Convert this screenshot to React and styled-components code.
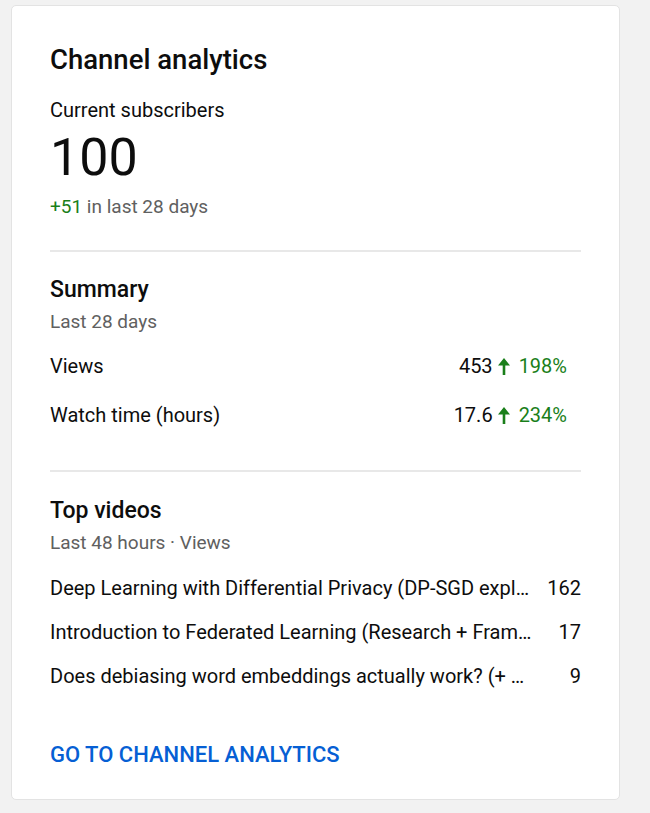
import styled, { createGlobalStyle } from "styled-components";

const GlobalStyle = createGlobalStyle`
  body {
    margin: 0;
    background-color: #f2f2f2;
    font-family: Roboto, "Noto Sans", Arial, sans-serif;
    color: #0d0d0d;
  }
`;

const Page = styled.div`
  padding: 5px 30px 12px 11px;
`;

const Card = styled.div`
  width: 609px;
  box-sizing: border-box;
  background-color: #ffffff;
  border: 1px solid #e3e3e3;
  border-radius: 5px;
  padding: 38px 38px 32px;
`;

const Title = styled.h1`
  margin: 0;
  font-size: 27.5px;
  line-height: 32px;
  font-weight: 500;
`;

const Label = styled.div`
  margin-top: ${(p) => p.$top || 0}px;
  font-size: 20px;
  line-height: 24px;
`;

const BigNumber = styled.div`
  margin-top: 6px;
  font-size: 52px;
  line-height: 60px;
`;

const Muted = styled.div`
  margin-top: ${(p) => p.$top || 0}px;
  font-size: 19px;
  line-height: 24px;
  color: #606060;
`;

const Green = styled.span`
  color: #1a7f1a;
`;

const Divider = styled.hr`
  border: none;
  height: 2px;
  background-color: #e8e8e8;
  margin: ${(p) => p.$top}px 0 0;
`;

const SectionTitle = styled.h2`
  margin: ${(p) => p.$top || 24}px 0 0;
  font-size: 23px;
  line-height: 28px;
  font-weight: 500;
`;

const StatRow = styled.div`
  display: flex;
  align-items: center;
  justify-content: space-between;
  padding-right: 14px;
  margin-top: ${(p) => p.$top}px;
  font-size: 20px;
  line-height: 24px;
`;

const StatValue = styled.div`
  display: flex;
  align-items: center;
`;

const Change = styled.span`
  display: inline-flex;
  align-items: center;
  color: #1a7f1a;
  margin-left: 5px;
  gap: 9px;
`;

const VideoRow = styled.div`
  display: grid;
  grid-template-columns: minmax(0, 1fr) 40px;
  column-gap: 8px;
  margin-top: ${(p) => p.$top}px;
  font-size: 20px;
  line-height: 24px;
`;

const VideoTitle = styled.span`
  white-space: nowrap;
  overflow: hidden;
  text-overflow: ellipsis;
`;

const VideoViews = styled.span`
  text-align: right;
`;

const Link = styled.a`
  display: block;
  margin-top: 55px;
  font-size: 22px;
  line-height: 24px;
  font-weight: 500;
  color: #065fd4;
  text-decoration: none;
  text-transform: uppercase;
`;

const ArrowUp = () => (
  <svg width="12" height="17" viewBox="0 0 12 17">
    <path d="M6 0 L12 7.5 L7.3 7.5 L7.3 17 L4.7 17 L4.7 7.5 L0 7.5 Z" fill="#1a7f1a" />
  </svg>
);

const stats = [
  { name: "Views", value: "453", change: "198%" },
  { name: "Watch time (hours)", value: "17.6", change: "234%" },
];

const videos = [
  { title: "Deep Learning with Differential Privacy (DP-SGD explained)", views: 162 },
  { title: "Introduction to Federated Learning (Research + Frameworks)", views: 17 },
  { title: "Does debiasing word embeddings actually work? (+ demo)", views: 9 },
];

export default function App() {
  return (
    <Page>
      <GlobalStyle />
      <Card>
        <Title>Channel analytics</Title>
        <Label $top={22}>Current subscribers</Label>
        <BigNumber>100</BigNumber>
        <Muted $top={7}>
          <Green>+51</Green> in last 28 days
        </Muted>

        <Divider $top={31} />
        <SectionTitle>Summary</SectionTitle>
        <Muted $top={6}>Last 28 days</Muted>
        {stats.map((s, i) => (
          <StatRow key={s.name} $top={i === 0 ? 20 : 25}>
            <span>{s.name}</span>
            <StatValue>
              {s.value}
              <Change>
                <ArrowUp />
                {s.change}
              </Change>
            </StatValue>
          </StatRow>
        ))}

        <Divider $top={43} />
        <SectionTitle $top={25}>Top videos</SectionTitle>
        <Muted $top={6}>Last 48 hours · Views</Muted>
        {videos.map((v, i) => (
          <VideoRow key={v.title} $top={i === 0 ? 21 : 20}>
            <VideoTitle>{v.title}</VideoTitle>
            <VideoViews>{v.views}</VideoViews>
          </VideoRow>
        ))}

        <Link href="#">Go to channel analytics</Link>
      </Card>
    </Page>
  );
}
